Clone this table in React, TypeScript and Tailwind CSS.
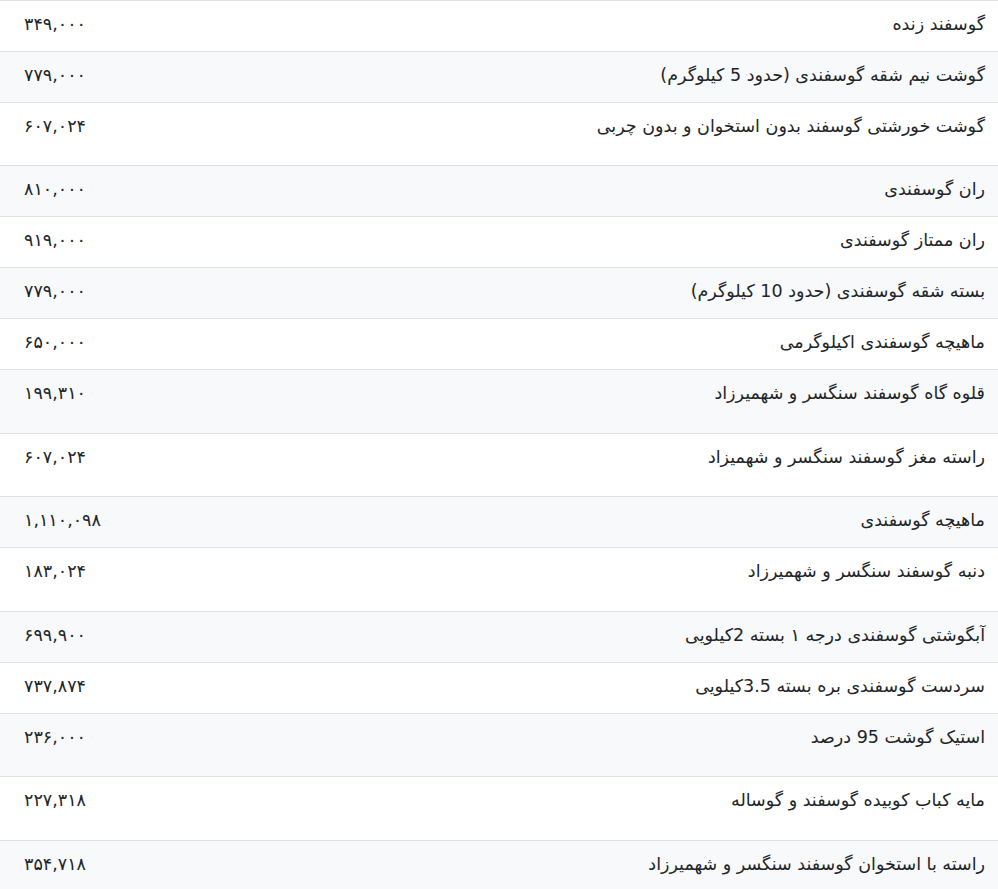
import React from 'react';

interface PriceRow {
  name: string;
  price: string;
  h: string;
}

const rows: PriceRow[] = [
  { name: 'گوسفند زنده', price: '۳۴۹,۰۰۰', h: 'h-[51px]' },
  { name: 'گوشت نیم شقه گوسفندی (حدود 5 کیلوگرم)', price: '۷۷۹,۰۰۰', h: 'h-[51px]' },
  { name: 'گوشت خورشتی گوسفند بدون استخوان و بدون چربی', price: '۶۰۷,۰۲۴', h: 'h-[63px]' },
  { name: 'ران گوسفندی', price: '۸۱۰,۰۰۰', h: 'h-[51px]' },
  { name: 'ران ممتاز گوسفندی', price: '۹۱۹,۰۰۰', h: 'h-[51px]' },
  { name: 'بسته شقه گوسفندی (حدود 10 کیلوگرم)', price: '۷۷۹,۰۰۰', h: 'h-[51px]' },
  { name: 'ماهیچه گوسفندی اکیلوگرمی', price: '۶۵۰,۰۰۰', h: 'h-[51px]' },
  { name: 'قلوه گاه گوسفند سنگسر و شهمیرزاد', price: '۱۹۹,۳۱۰', h: 'h-[64px]' },
  { name: 'راسته مغز گوسفند سنگسر و شهمیزاد', price: '۶۰۷,۰۲۴', h: 'h-[63px]' },
  { name: 'ماهیچه گوسفندی', price: '۱,۱۱۰,۰۹۸', h: 'h-[51px]' },
  { name: 'دنبه گوسفند سنگسر و شهمیرزاد', price: '۱۸۳,۰۲۴', h: 'h-[64px]' },
  { name: 'آبگوشتی گوسفندی درجه ۱ بسته 2کیلویی', price: '۶۹۹,۹۰۰', h: 'h-[51px]' },
  { name: 'سردست گوسفندی بره بسته 3.5کیلویی', price: '۷۳۷,۸۷۴', h: 'h-[51px]' },
  { name: 'استیک گوشت 95 درصد', price: '۲۳۶,۰۰۰', h: 'h-[63px]' },
  { name: 'مایه کباب کوبیده گوسفند و گوساله', price: '۲۲۷,۳۱۸', h: 'h-[64px]' },
  { name: 'راسته با استخوان گوسفند سنگسر و شهمیرزاد', price: '۳۵۴,۷۱۸', h: 'h-[51px]' },
];

export default function App() {
  return (
    <div
      dir="rtl"
      className="w-full bg-white text-[17.5px] leading-6 text-[#212529]"
      style={{ fontFamily: '"DejaVu Sans", sans-serif' }}
    >
      {rows.map((row, i) => (
        <div
          key={i}
          className={`flex items-start justify-between border-t border-[#dee2e6] pt-[11px] ${row.h} ${
            i % 2 === 1 ? 'bg-[#f8f9fa]' : 'bg-white'
          }`}
        >
          <div className="pr-[13px]">{row.name}</div>
          <div dir="ltr" className="pl-[24px]">
            {row.price}
          </div>
        </div>
      ))}
    </div>
  );
}
